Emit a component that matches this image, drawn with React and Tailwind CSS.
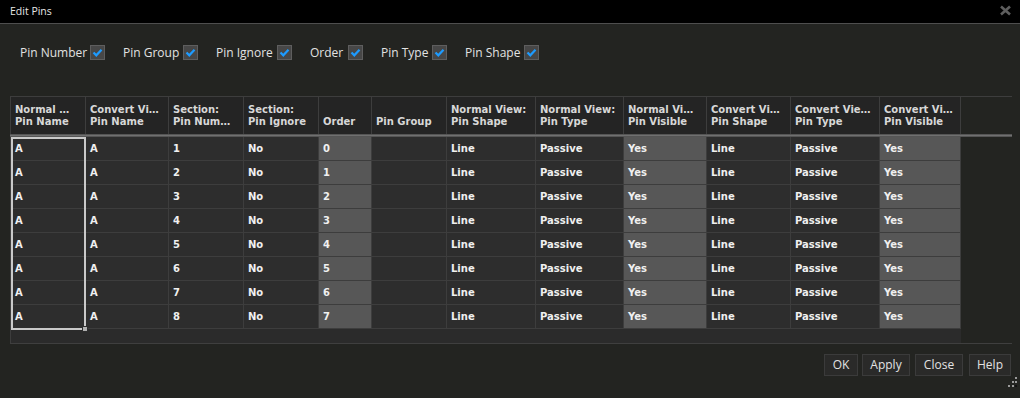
import React from 'react';

const columns = [
  { w: 'w-[75px]', top: 'Normal …', bottom: 'Pin Name' },
  { w: 'w-[83px]', top: 'Convert Vi…', bottom: 'Pin Name' },
  { w: 'w-[75px]', top: 'Section:', bottom: 'Pin Num…' },
  { w: 'w-[75px]', top: 'Section:', bottom: 'Pin Ignore' },
  { w: 'w-[53px]', top: '', bottom: 'Order', light: true },
  { w: 'w-[75px]', top: '', bottom: 'Pin Group' },
  { w: 'w-[89px]', top: 'Normal View:', bottom: 'Pin Shape' },
  { w: 'w-[88px]', top: 'Normal View:', bottom: 'Pin Type' },
  { w: 'w-[83px]', top: 'Normal Vi…', bottom: 'Pin Visible', light: true },
  { w: 'w-[84px]', top: 'Convert Vi…', bottom: 'Pin Shape' },
  { w: 'w-[89px]', top: 'Convert Vie…', bottom: 'Pin Type' },
  { w: 'w-[81px]', top: 'Convert Vi…', bottom: 'Pin Visible', light: true },
];

const rows = Array.from({ length: 8 }, (_, i) => [
  'A', 'A', String(i + 1), 'No', String(i), '', 'Line', 'Passive', 'Yes', 'Line', 'Passive', 'Yes',
]);

const options = [
  { label: 'Pin Number', w: 'w-[63px]' },
  { label: 'Pin Group', w: 'w-[53px]' },
  { label: 'Pin Ignore', w: 'w-[54px]' },
  { label: 'Order', w: 'w-[31px]' },
  { label: 'Pin Type', w: 'w-[44px]' },
  { label: 'Pin Shape', w: 'w-[52px]' },
];

function Checkbox() {
  return (
    <span className="flex h-[15px] w-[15px] items-center justify-center border border-[#5e5e5e] bg-[#474747]">
      <svg width="11" height="11" viewBox="0 0 11 11">
        <path d="M1.5 5.5 L4.3 8.3 L9.5 2.8" fill="none" stroke="#1d9bff" strokeWidth="2.2" />
      </svg>
    </span>
  );
}

function Button({ children, className }) {
  return (
    <button
      className={`flex h-[22px] items-center justify-center border border-[#3b3b3b] bg-[#2a2a29] text-[12px] leading-none text-[#e2e2e2] ${className}`}
    >
      {children}
    </button>
  );
}

export default function App() {
  return (
    <div className="flex h-[398px] w-[1020px] flex-col overflow-hidden bg-[#232421] font-['Open_Sans',_'Noto_Sans',_sans-serif]">
      {/* title bar */}
      <div className="flex h-[24px] shrink-0 items-center justify-between border-b border-[#4e4e4e] bg-black pl-[10px] pr-[8px]">
        <span className="text-[10.5px] text-[#e6e6e6]">Edit Pins</span>
        <svg width="13" height="11" viewBox="0 0 13 11" className="mb-[3px]">
          <path d="M2 1.5 L11 9.5 M11 1.5 L2 9.5" stroke="#5e5e5e" strokeWidth="2.6" />
        </svg>
      </div>

      {/* option checkboxes */}
      <div className="mt-[21px] flex h-[15px] items-center gap-[18px] pl-[20px]">
        {options.map((o) => (
          <div key={o.label} className="flex items-center gap-[7px]">
            <span className={`${o.w} whitespace-nowrap text-[12px] leading-[15px] text-[#e2e2e2]`}>{o.label}</span>
            <Checkbox />
          </div>
        ))}
      </div>

      {/* grid */}
      <div className="ml-[10px] mt-[36px] w-[1002px] border-t border-[#3d3d3d] font-['DejaVu_Sans',_sans-serif] text-[10px] font-bold">
        <div className="flex h-[37px] w-[951px] border-l border-[#3d3d3d] bg-[#242424]">
          {columns.map((c, i) => (
            <div
              key={i}
              className={`${c.w} flex flex-col justify-end overflow-hidden whitespace-nowrap border-r border-[#3d3d3d] pb-[6px] pl-[4px] leading-[12px] text-[#d8d8d8]`}
            >
              {c.top && <span>{c.top}</span>}
              <span>{c.bottom}</span>
            </div>
          ))}
        </div>
        <div className="h-[3px] border-y border-[#555] bg-[#707070]" />

        <div className="relative w-[951px] border-l border-[#3d3d3d]">
          {rows.map((r, ri) => (
            <div key={ri} className="flex h-[24px] border-b border-[#3d3d3d]">
              {r.map((v, ci) => (
                <div
                  key={ci}
                  className={`${columns[ci].w} flex items-center border-r border-[#3d3d3d] pl-[4px] text-[#f0f0f0] ${
                    columns[ci].light ? 'bg-[#575757]' : 'bg-[#2d2d2d]'
                  }`}
                >
                  {v}
                </div>
              ))}
            </div>
          ))}
          {/* selection box */}
          <div className="pointer-events-none absolute left-0 top-0 h-[193px] w-[75px] border-2 border-[#c9c9c9]">
            <div className="absolute -bottom-[4px] -right-[4px] h-[6px] w-[6px] border border-[#2d2d2d] bg-[#b0b0b0]" />
          </div>
        </div>
        <div className="border-b border-[#3f3f3f]">
          <div className="h-[14px] w-[951px] border-l border-[#3d3d3d] bg-[#2b2b2b]" />
        </div>
      </div>

      {/* buttons */}
      <div className="mt-[10px] flex items-center justify-end pr-[9px]">
        <Button className="w-[34px]">OK</Button>
        <Button className="ml-[4px] w-[48px]">Apply</Button>
        <Button className="ml-[5px] w-[48px]">Close</Button>
        <Button className="ml-[6px] w-[42px]">Help</Button>
      </div>
      <div className="flex justify-end pr-[2px] pt-[1px]">
        <svg width="11" height="11" viewBox="0 0 11 11">
          <rect x="8" y="0" width="2" height="2" fill="#9a9a9a" />
          <rect x="5" y="4" width="2" height="2" fill="#9a9a9a" />
          <rect x="8" y="4" width="2" height="2" fill="#9a9a9a" />
          <rect x="1" y="8" width="2" height="2" fill="#9a9a9a" />
          <rect x="5" y="8" width="2" height="2" fill="#9a9a9a" />
          <rect x="8" y="8" width="2" height="2" fill="#111" />
        </svg>
      </div>
    </div>
  );
}
